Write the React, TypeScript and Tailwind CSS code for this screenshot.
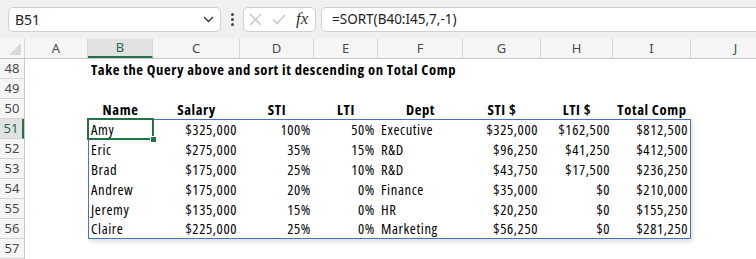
import React from "react";

const cols = [
  { k: "A", w: 63 },
  { k: "B", w: 65 },
  { k: "C", w: 87 },
  { k: "D", w: 74 },
  { k: "E", w: 64 },
  { k: "F", w: 85 },
  { k: "G", w: 78 },
  { k: "H", w: 72 },
  { k: "I", w: 78 },
  { k: "J", w: 90 },
];

const heads = ["Name", "Salary", "STI", "LTI", "Dept", "STI $", "LTI $", "Total Comp"];
const rows = [
  ["Amy", "$325,000", "100%", "50%", "Executive", "$325,000", "$162,500", "$812,500"],
  ["Eric", "$275,000", "35%", "15%", "R&D", "$96,250", "$41,250", "$412,500"],
  ["Brad", "$175,000", "25%", "10%", "R&D", "$43,750", "$17,500", "$236,250"],
  ["Andrew", "$175,000", "20%", "0%", "Finance", "$35,000", "$0", "$210,000"],
  ["Jeremy", "$135,000", "15%", "0%", "HR", "$20,250", "$0", "$155,250"],
  ["Claire", "$225,000", "25%", "0%", "Marketing", "$56,250", "$0", "$281,250"],
];
const tw = [65, 87, 74, 64, 85, 78, 72, 78];
const leftCols = [0, 4];

const cellFont = "font-['Open_Sans',sans-serif] font-stretch-[75%] text-[14.6px] tracking-[0.6px] text-black";

export default function App() {
  return (
    <div className="w-[756px] h-[259px] overflow-hidden bg-white flex flex-col">
      {/* toolbar */}
      <div className="h-[39px] shrink-0 bg-[#f0f0f0] flex items-center pl-[8px] gap-0 font-['Noto_Sans',sans-serif] text-[#222]">
        <div className="w-[213px] h-[25px] bg-white border border-[#d0d0d0] rounded-[5px] flex items-center justify-between pl-[6px] pr-[6px]">
          <span className="text-[14px] leading-none">B51</span>
          <svg width="11" height="7" viewBox="0 0 11 7">
            <path d="M1 1 L5.5 5.5 L10 1" stroke="#333" strokeWidth="1.3" fill="none" />
          </svg>
        </div>
        <div className="w-[22px] flex flex-col items-center gap-[2px]">
          <div className="w-[3px] h-[3px] rounded-full bg-[#444]" />
          <div className="w-[3px] h-[3px] rounded-full bg-[#444]" />
          <div className="w-[3px] h-[3px] rounded-full bg-[#444]" />
        </div>
        <div className="w-[73px] h-[25px] bg-white border border-[#d0d0d0] rounded-[5px] flex items-center pl-[5px] gap-[10px]">
          <svg width="13" height="13" viewBox="0 0 13 13">
            <path d="M1 1 L12 12 M12 1 L1 12" stroke="#c4c4c4" strokeWidth="1.3" />
          </svg>
          <svg width="14" height="11" viewBox="0 0 14 11">
            <path d="M1 5.5 L5 9.5 L13 1" stroke="#c4c4c4" strokeWidth="1.3" fill="none" />
          </svg>
          <span className="font-['Liberation_Serif',serif] italic text-[17px] leading-none text-[#333] -mt-[3px]">fx</span>
        </div>
        <div className="flex-1 ml-[5px] h-[25px] bg-white border border-r-0 border-[#d0d0d0] rounded-l-[5px] flex items-center pl-[10px]">
          <span className="text-[13.5px] leading-none">=SORT(B40:I45,7,-1)</span>
        </div>
      </div>

      {/* column header */}
      <div className="h-[20px] shrink-0 flex bg-[#f5f5f5] border-b border-[#c8c8c8] font-['Noto_Sans',sans-serif] text-[13px] text-[#4a4a4a]">
        <div className="w-[25px] shrink-0 border-r border-[#d6d6d6] relative">
          <svg className="absolute right-[3px] bottom-[3px]" width="12" height="12" viewBox="0 0 12 12">
            <path d="M12 0 L12 12 L0 12 Z" fill="#d9d9d9" />
          </svg>
        </div>
        {cols.map((c) =>
          c.k === "B" ? (
            <div key={c.k} style={{ width: c.w }} className="shrink-0 flex items-center justify-center bg-[#e1e1e1] border-r border-[#d6d6d6] border-b-2 border-b-[#217346] text-[#1f6b43] leading-none">
              {c.k}
            </div>
          ) : (
            <div key={c.k} style={{ width: c.w }} className="shrink-0 flex items-center justify-center border-r border-[#d6d6d6] leading-none">
              {c.k}
            </div>
          )
        )}
      </div>

      <div className="flex flex-1">
        {/* row header */}
        <div className="w-[25px] shrink-0 flex flex-col bg-[#f5f5f5] border-r border-[#c8c8c8] font-['Noto_Sans',sans-serif] text-[13px] text-[#4a4a4a]">
          {[48, 49, 50, 51, 52, 53, 54, 55, 56, 57].map((n) =>
            n === 51 ? (
              <div key={n} className="h-[20px] shrink-0 flex items-center justify-center bg-[#e1e1e1] border-b border-[#d6d6d6] border-r-2 border-r-[#217346] text-[#1f6b43] leading-none">
                {n}
              </div>
            ) : (
              <div key={n} className="h-[20px] shrink-0 flex items-center justify-center border-b border-[#d6d6d6] leading-none">
                {n}
              </div>
            )
          )}
        </div>

        {/* sheet */}
        <div className={`flex flex-col ${cellFont}`}>
          <div className="h-[20px] flex items-center">
            <div className="w-[63px] shrink-0" />
            <div className="pl-[3px] font-bold whitespace-nowrap leading-none">Take the Query above and sort it descending on Total Comp</div>
          </div>
          <div className="h-[20px]" />
          <div className="h-[20px] flex items-center font-bold">
            <div className="w-[63px] shrink-0" />
            {heads.map((h, i) => (
              <div key={h} style={{ width: tw[i] }} className="shrink-0 text-center leading-none whitespace-nowrap">
                {h}
              </div>
            ))}
          </div>
          <div className="flex">
            <div className="w-[63px] shrink-0" />
            <div className="relative border border-[#4472c4] shadow-[2px_3px_4px_rgba(0,0,0,0.12)] font-medium">
              {rows.map((r, ri) => (
                <div key={ri} className={`flex items-center ${ri === 0 ? "h-[19px]" : ri === 5 ? "h-[19px]" : "h-[20px]"}`}>
                  {r.map((v, i) => (
                    <div
                      key={i}
                      style={{ width: i === 0 || i === 7 ? tw[i] - 1 : tw[i] }}
                      className={`shrink-0 leading-none whitespace-nowrap ${leftCols.includes(i) ? (i === 0 ? "pl-[2px]" : "pl-[3px]") : i === 7 ? "text-right pr-[2px]" : "text-right pr-[3px]"}`}
                    >
                      {v}
                    </div>
                  ))}
                </div>
              ))}
              <div className="absolute -left-[2px] -top-[2px] w-[67px] h-[22px] border-2 border-[#217346]" />
              <div className="absolute left-[61px] top-[16px] w-[7px] h-[7px] bg-[#217346] border border-white" />
            </div>
          </div>
          <div className="h-[20px]" />
        </div>
      </div>
    </div>
  );
}
